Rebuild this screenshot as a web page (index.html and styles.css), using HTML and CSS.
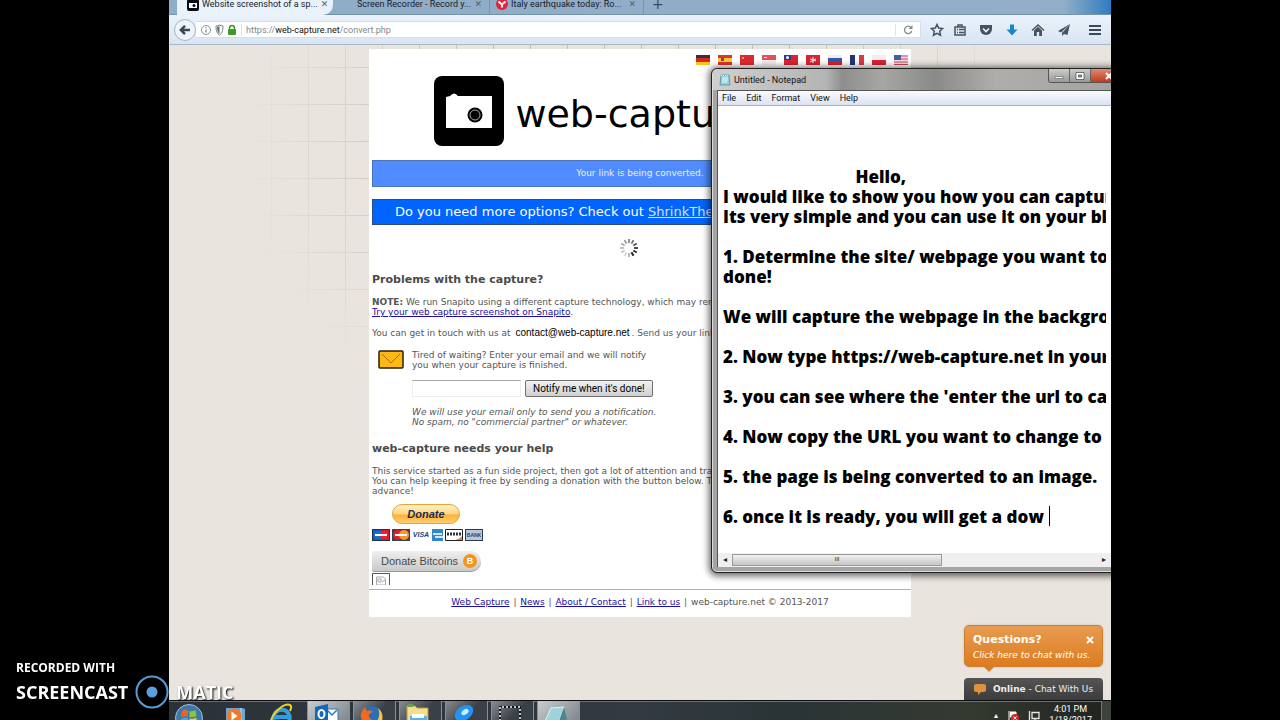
FILE: index.html
```
<!DOCTYPE html>
<html lang="en">
<head>
<meta charset="utf-8">
<title>Website screenshot of a specific url</title>
<link rel="stylesheet" href="styles.css">
</head>
<body>
<main class="desktop">
  <nav class="tabs" aria-label="Tabs">
    <a class="tab tab-active" href="#"><svg class="fav" viewBox="0 0 12 12"><rect width="12" height="12" rx="2" fill="#0a0a14"/><path d="M2 4h8v5H2z" fill="#fff"/><circle cx="7" cy="6.500" r="1.500" fill="#0a0a14"/></svg><span>Website screenshot of a sp...</span><i class="x">✕</i></a>
    <a class="tab tab-mid" href="#"><span>Screen Recorder - Record y...</span><i class="x">✕</i></a>
    <a class="tab tab-last" href="#"><svg class="fav" viewBox="0 0 12 12"><circle cx="6" cy="6" r="6" fill="#e2233b"/><path d="M2.500 3.500L6 6.500l3.500-3M6 6v3.500" stroke="#fff" stroke-width="2" fill="none"/></svg><span>Italy earthquake today: Ro...</span><i class="x">✕</i></a>
    <button class="newtab" aria-label="New tab">+</button>
  </nav>
  <div class="toolbar">
    <button class="back" aria-label="Back"><svg viewBox="0 0 24 24"><path d="M12 7l-5 5 5 5M7 12h11" fill="none" stroke="#3d4855" stroke-width="3"/></svg></button>
    <div class="urlbar">
      <svg class="ico-info" viewBox="0 0 32 12"><circle cx="6" cy="6" r="4.500" fill="none" stroke="#8b9096"/><path d="M6 5.500v3M6 3v1.200" stroke="#7b8086" stroke-width="1.200"/><path d="M16 2c1.500 0 2.500-.4 3.500-1 1 .6 2 1 3.500 1 0 5-1 7.500-3.500 9C17 9.500 16 7 16 2z" fill="#fff" stroke="#7b8086"/><path d="M19.500 2v8c-2-1.500-2.500-4-2.500-7z" fill="#6b7076"/></svg>
      <svg class="ico-lock" viewBox="0 0 10 12"><path d="M2.500 6V4a2.500 2.500 0 0 1 5 0v2" fill="none" stroke="#3f9a2c" stroke-width="1.500"/><rect x="1" y="5" width="8" height="6" rx="1" fill="#3f9a2c"/></svg>
      <span class="url">https://<b>web-capture.net</b>/convert.php</span>
      <button class="reload" aria-label="Reload"><svg viewBox="0 0 12 12"><path d="M9 3.500A3.700 3.700 0 1 0 9.700 7" fill="none" stroke="#858b92" stroke-width="1.300"/><path d="M10.500 1v4h-4z" fill="#858b92"/></svg></button>
    </div>
    <div class="tools">
      <button aria-label="Bookmark"><svg viewBox="0 0 14 14"><path d="M7 1.500l1.700 3.600 3.900.5-2.900 2.700.8 3.900L7 10.300l-3.500 1.900.8-3.900L1.400 5.600l3.900-.5z" fill="none" stroke="#47525f" stroke-width="1.500"/></svg></button>
      <button aria-label="Bookmarks list"><svg viewBox="0 0 14 14"><path d="M2 4h10v8H2zM5 4V2h4v2M4 6.500h1M6 6.500h5M4 9.500h1M6 9.500h5" fill="none" stroke="#47525f" stroke-width="1.500"/></svg></button>
      <button aria-label="Pocket"><svg viewBox="0 0 14 14"><path d="M1 2h12v4a6 6 0 0 1-12 0z" fill="#47525f"/><path d="M4 5.500l3 3 3-3" fill="none" stroke="#eef4fb" stroke-width="1.600"/></svg></button>
      <button aria-label="Downloads"><svg viewBox="0 0 14 14"><path d="M5 1.500h4v5h3.500L7 12.500 1.500 6.500H5z" fill="#1787c9"/></svg></button>
      <button aria-label="Home"><svg viewBox="0 0 14 14"><path d="M1 7.500l6-5.500 6 5.500" fill="none" stroke="#47525f" stroke-width="1.500"/><path d="M3 7.500l4-3.700 4 3.700V13H8.200V9H5.800v4H3z" fill="#47525f"/></svg></button>
      <button aria-label="Share"><svg viewBox="0 0 14 14"><path d="M13 1L1 8l3 1.500zM13 1L5 10v3l2-2 3.500 1z" fill="#47525f"/></svg></button>
      <button class="menu" aria-label="Menu"><svg viewBox="0 0 14 14"><path d="M1 3h12M1 7h12M1 11h12" stroke="#3d4855" stroke-width="2"/></svg></button>
    </div>
  </div>

  <section class="viewport">
    <div class="gridlines"></div>
    <article class="sheet">
      <div class="flags">
        <svg viewBox="0 0 14 10"><path fill="#333" d="M0 0h14v4H0z"/><path fill="#d22" d="M0 3h14v4H0z"/><path fill="#f6c71d" d="M0 7h14v3H0z"/></svg>
        <svg viewBox="0 0 14 10"><path fill="#d33" d="M0 0h14v10H0z"/><path fill="#f8cf2c" d="M0 3h14v4H0z"/><path fill="#b33" d="M3 3h3v3H3z"/></svg>
        <svg viewBox="0 0 14 10"><path fill="#de2a2d" d="M0 0h14v10H0z"/><path fill="#f4a13a" d="M2 2h2v2H2z"/></svg>
        <svg viewBox="0 0 14 10"><path fill="#f3eeee" d="M0 0h14v10H0z"/><path fill="#e0525a" d="M0 0h14v5H0z"/><path fill="#fff" d="M2 2h3v1H2z"/></svg>
        <svg viewBox="0 0 14 10"><path fill="#dc2330" d="M0 0h14v10H0z"/><path fill="#2b3c96" d="M0 0h7v5H0z"/><circle cx="3.500" cy="2.500" r="1.500" fill="#fff"/></svg>
        <svg viewBox="0 0 14 10"><path fill="#dc2330" d="M0 0h14v10H0z"/><path d="M7 2v6M4 4l6 2M4 7l6-3" stroke="#fff"/></svg>
        <svg viewBox="0 0 14 10"><path fill="#eee" d="M0 0h14v10H0z"/><path fill="#2c5cae" d="M0 3h14v4H0z"/><path fill="#d22" d="M0 7h14v3H0z"/></svg>
        <svg viewBox="0 0 14 10"><path fill="#fff" d="M0 0h14v10H0z"/><path fill="#25337d" d="M0 0h5v10H0z"/><path fill="#dc3a42" d="M9 0h5v10H9z"/></svg>
        <svg viewBox="0 0 14 10"><path fill="#f3eeee" d="M0 0h14v10H0z"/><path fill="#dc2330" d="M0 5h14v5H0z"/></svg>
        <svg viewBox="0 0 14 10"><path fill="#f1dfe3" d="M0 0h14v10H0z"/><path d="M0 1h14M0 4h14M0 7h14M0 9.500h14" stroke="#d0495a"/><path fill="#4a5ca8" d="M0 0h7v5H0z"/></svg>
      </div>
      <header class="brand">
        <svg viewBox="0 0 70 70"><rect width="70" height="70" rx="8" fill="#000"/><path d="M12 21l4-1q4-5 8 0h34v32H12z" fill="#fff"/><circle cx="41" cy="39" r="7.500" fill="#000"/><circle cx="41" cy="39" r="5" fill="none" stroke="#aaa"/></svg>
        <span>web-capture.net</span>
      </header>
      <p class="bar bar-status">Your link is being converted.</p>
      <p class="bar bar-promo">Do you need more options? Check out <a href="#">ShrinkTheWeb</a></p>
      <svg class="spinner" viewBox="-10 -10 20 20" stroke="#222" stroke-width="1.600">
        <path d="M5 0h4"/><path d="M5 0h4" transform="rotate(30)"/><path d="M5 0h4" transform="rotate(60)" stroke-width="2"/><path d="M5 0h4" transform="rotate(90)" opacity=".4"/><path d="M5 0h4" transform="rotate(120)" opacity=".2"/><path d="M5 0h4" transform="rotate(150)" opacity=".25"/><path d="M5 0h4" transform="rotate(180)" opacity=".35"/><path d="M5 0h4" transform="rotate(210)" opacity=".4"/><path d="M5 0h4" transform="rotate(240)" opacity=".5"/><path d="M5 0h4" transform="rotate(270)" opacity=".6"/><path d="M5 0h4" transform="rotate(300)" opacity=".7"/><path d="M5 0h4" transform="rotate(330)" opacity=".8"/>
      </svg>
      <h2>Problems with the capture?</h2>
      <p class="note"><b>NOTE:</b> We run Snapito using a different capture technology, which may render better.<br><a href="#">Try your web capture screenshot on Snapito</a>.</p>
      <p class="touch">You can get in touch with us at <span class="mail">contact@web-capture.net</span>. Send us your link.</p>
      <form class="notify">
        <svg viewBox="0 0 26 19"><rect x="1" y="1" width="24" height="17" rx="1" fill="#fdb813" stroke="#2d1d05" stroke-width="1.500"/><path d="M4 4l9 9 9-9" fill="none" stroke="#a86c08"/></svg>
        <div>
          <label for="email">Tired of waiting? Enter your email and we will notify<br>you when your capture is finished.</label>
          <div class="row"><input id="email" type="email"><button type="button">Notify me when it's done!</button></div>
          <em>We will use your email only to send you a notification.<br>No spam, no "commercial partner" or whatever.</em>
        </div>
      </form>
      <h2>web-capture needs your help</h2>
      <p class="help">This service started as a fun side project, then got a lot of attention and traffic.<br>You can help keeping it free by sending a donation with the button below. Thanks in<br>advance!</p>
      <button class="donate">Donate</button>
      <div class="cards">
        <svg viewBox="0 0 18 12"><path fill="#1d58b8" d="M0 0h18v12H0z"/><path fill="#d31f30" d="M9 0h9v12H9z"/><circle cx="6" cy="6" r="4" fill="#1a6fd0"/><circle cx="12" cy="6" r="4" fill="#e8222e"/><path d="M3 6h12" stroke="#fff" stroke-width="2"/><path d="M.5.500h17v11H.5z" fill="none" stroke="#234"/></svg>
        <svg viewBox="0 0 18 12"><path fill="#7b2b3a" d="M0 0h18v12H0z"/><circle cx="6" cy="6" r="5" fill="#d8222c"/><circle cx="12" cy="6" r="5" fill="#f09a2d"/><path d="M3 6h12" stroke="#fff" stroke-width="2"/><path d="M.5.500h17v11H.5z" fill="none" stroke="#345"/></svg>
        <span class="card card-visa">VISA</span>
        <svg class="amex" viewBox="0 0 11 12"><path fill="#3388c4" d="M0 0h11v12H0z"/><path d="M1 5h9M3 8h8" stroke="#cfe6f5" stroke-width="2"/></svg>
        <svg viewBox="0 0 18 12"><path fill="#fff" d="M0 0h18v12H0z"/><path fill="#ee8a2b" d="M6 12q8-1 12-6v6z"/><path d="M2 5h14" stroke="#333" stroke-width="3" stroke-dasharray="2 1"/><path d="M.5.500h17v11H.5z" fill="none" stroke="#222"/></svg>
        <span class="card card-bank">BANK</span>
      </div>
      <button class="bitcoin">Donate Bitcoins <span>B</span></button>
      <svg class="broken" viewBox="0 0 18 12"><path d="M.5 12V.500h17V12" fill="none" stroke="#555"/><path d="M4.500 4h7l2 2v6h-9zM6 6h3v3H6zM10 9l3-2" fill="none" stroke="#aaa"/></svg>
      <footer><a href="#">Web Capture</a> <i>|</i> <a href="#">News</a> <i>|</i> <a href="#">About / Contact</a> <i>|</i> <a href="#">Link to us</a> <i>|</i> web-capture.net © 2013-2017</footer>
    </article>
    <aside class="chat">
      <div class="bubble"><button aria-label="Close"><svg viewBox="0 0 8 8"><path d="M1 1l6 6M7 1L1 7" stroke="#fff" stroke-width="2"/></svg></button><b>Questions?</b><br><em>Click here to chat with us.</em></div>
      <button class="online"><svg viewBox="0 0 12 11"><path d="M2 0h8a2 2 0 0 1 2 2v4a2 2 0 0 1-2 2H7l-3 3V8H2a2 2 0 0 1-2-2V2a2 2 0 0 1 2-2z" fill="#e0913c"/></svg><span><b>Online</b> - Chat With Us</span></button>
    </aside>
  </section>

  <section class="notepad" aria-label="Untitled - Notepad">
    <header class="titlebar">
      <svg viewBox="0 0 12 12"><path d="M2 1h8l1 10H1z" fill="#8fd0dc" stroke="#6a9aa6"/><path d="M3 4h6M3 6h6M3 8h5" stroke="#e9fbff"/><path d="M2 1.500h8" stroke="#dff" stroke-dasharray="1 1"/></svg>
      <span>Untitled - Notepad</span>
      <div class="wbtns"><button aria-label="Minimize"><svg viewBox="0 0 10 8"><path d="M1 4.500h8v2H1z" fill="#fff" stroke="#555" stroke-width=".6"/></svg></button><button aria-label="Maximize"><svg viewBox="0 0 10 8"><path d="M1 .500h8v7H1z" fill="#fff" stroke="#555" stroke-width=".8"/><path d="M3.500 3h3v2h-3z" fill="#999" stroke="#555" stroke-width=".8"/></svg></button><button class="close" aria-label="Close"><svg viewBox="0 0 10 8"><path d="M2 1l6 6M8 1L2 7" stroke="#fff" stroke-width="2"/></svg></button></div>
    </header>
    <div class="inner">
      <nav class="menus"><button>File</button><button>Edit</button><button>Format</button><button>View</button><button>Help</button></nav>
      <div class="edit">
        <textarea wrap="off" spellcheck="false" aria-label="Text editor">



                              Hello,
I would like to show you how you can capture
Its very simple and you can use it on your bl

1. Determine the site/ webpage you want to
done!

We will capture the webpage in the background

2. Now type https://web-capture.net in your

3. you can see where the 'enter the url to ca

4. Now copy the URL you want to change to

5. the page is being converted to an image.

6. once it is ready, you will get a dow</textarea>
        <i class="caret"></i>
      </div>
      <div class="scroll"><span>◂</span><div class="thumb">III</div><span>▸</span></div>
    </div>
  </section>

  <footer class="taskbar">
    <div class="apps">
      <div class="app plain"><svg viewBox="0 0 28 18"><circle cx="14" cy="15" r="13.500" fill="#3f78a8" stroke="#9cc4dd"/><path d="M7 8q3-2 6-.5v6q-3-1-7 1z" fill="#e8642c"/><path d="M14.500 8q3 1 6-1l1 6q-4 2-7 1z" fill="#8cc63e"/><path d="M6 16q3-2 7-1v3H6z" fill="#45a8e6"/><path d="M14.500 15.500q4 1 7-1V18h-7z" fill="#fbc82e"/></svg></div>
      <div class="app plain"><svg viewBox="0 0 28 18"><path d="M5 5h16l3 1v12H5z" fill="#6aa7d6"/><path d="M20 5v13" stroke="#b8dbf2"/><circle cx="13" cy="13" r="7.500" fill="#f07a28"/><path d="M10.500 8.500v9l6-4.500z" fill="#fff"/></svg></div>
      <div class="app plain"><svg viewBox="0 0 28 18"><path d="M22 18a8 8 0 1 0-15-1M8 14h14" fill="none" stroke="#2f9fe2" stroke-width="4"/><path d="M4 17C8 7 18 0 23 2c2 1 1 4 0 6" fill="none" stroke="#f0d02e" stroke-width="2"/></svg></div>
      <div class="app lit"><svg viewBox="0 0 28 18"><path d="M14 6h12v12H14z" fill="#fff" stroke="#2a7ac4"/><path d="M15 7l5 5 5-5" fill="none" stroke="#2a7ac4" stroke-width="1.500"/><path d="M3 4l13-3v17H3z" fill="#1468b8"/><ellipse cx="9.500" cy="11" rx="3" ry="4" fill="none" stroke="#fff" stroke-width="2"/></svg></div>
      <div class="app"><svg viewBox="0 0 28 18"><circle cx="14" cy="13" r="10" fill="#2d6fb6"/><path d="M4 8q-3 7 1 10h13q-8-1-7-7l4-2q-3-3-6-1-2-2-1-4-3 1-4 4z" fill="#ee6a1f"/><path d="M20 5q6 5 4 13h-5q4-6 1-13z" fill="#fbc43a"/></svg></div>
      <div class="app"><svg viewBox="0 0 28 18"><path d="M3 3h8l2 2h11v13H3z" fill="#f4dd8b" stroke="#b99a45"/><path d="M6 13h17v5H6z" fill="#5fb0dc"/><path d="M8 11h12v4H8z" fill="#fff"/><path d="M4 1h5v3H4z" fill="#6a9c54"/></svg></div>
      <div class="app"><svg viewBox="0 0 28 18"><ellipse cx="14" cy="10" rx="10" ry="7" transform="rotate(-35 14 10)" fill="#2295f4"/><ellipse cx="15" cy="9" rx="4" ry="2.500" transform="rotate(-35 15 9)" fill="#cdeeff"/></svg></div>
      <div class="app"><svg viewBox="0 0 28 18"><path d="M4 18V4h20v14" fill="none" stroke="#111" stroke-width="2"/><path d="M4 18V4h20v14" fill="none" stroke="#fff" stroke-width="1.500" stroke-dasharray="2 2"/></svg></div>
      <div class="app lit"><svg viewBox="0 0 28 18"><path d="M9 5l13-1-5 14H3z" fill="#9fd3dc" stroke="#dff4f7"/><path d="M22 4l3 14h-8z" fill="#4c8492"/></svg></div>
    </div>
    <div class="tray">
      <span>▴</span>
      <svg viewBox="0 0 12 12"><path d="M2 1v11M3 2h6v5H3" fill="#fff" stroke="#fff"/><circle cx="8" cy="8" r="4" fill="#d8232b"/><path d="M6.500 6.500l3 3M9.500 6.500l-3 3" stroke="#fff"/></svg>
      <svg viewBox="0 0 12 12"><path d="M4 2.500h7v6H4zM1.500 1v10H8M7 9v3" fill="none" stroke="#e8e8e8" stroke-width="1.300"/></svg>
      <time>4:01 PM<br>1/18/2017</time>
      <i class="peek"></i>
    </div>
  </footer>
</main>
<div class="watermark">
  <small>RECORDED WITH</small>
  <div><span>SCREENCAST</span><svg viewBox="0 0 34 34"><circle cx="17" cy="17" r="15.500" fill="#000" stroke="#5b9bd5" stroke-width="2"/><circle cx="17" cy="17" r="5.500" fill="#5b9fdc"/></svg><span>MATIC</span></div>
</div>
</body>
</html>
```
FILE: styles.css
```
* { box-sizing: border-box; }
body { margin: 0; background: #000; font-family: "DejaVu Sans", sans-serif; font-size: 9px; line-height: 10px; color: #555; }
button { border: 0; padding: 0; background: none; font: inherit; color: inherit; }
svg { display: block; flex: none; }
p, h2 { margin: 0; }
a { color: #1a0fa8; }
.desktop { position: relative; height: 100vh; margin: 0 169px; overflow: hidden; display: flex; flex-direction: column; }

.tabs { height: 15px; flex: none; display: flex; background: linear-gradient(90deg, #8fadc8, #93aec6 92%, #91aec8 95%, #2f7cc0); border-bottom: 1px solid #7592ab; padding-left: 8px; font: 9px/11px Roboto, sans-serif; }
.tab { display: flex; align-items: center; gap: 3px; padding-bottom: 6px; color: #16202c; text-decoration: none; white-space: nowrap; }
.tab span { flex: 1; }
.tab-active { width: 156px; height: 15px; padding-left: 10px; padding-right: 5px; background: #e9f2fb; border-radius: 0 0 10px 0; }
.tab-mid { width: 156px; padding-left: 24px; padding-right: 7px; }
.tab-last { width: 155px; padding-left: 6px; padding-right: 7px; border-left: 1px solid #7894ad; border-right: 1px solid #7894ad; }
.fav { width: 12px; height: 12px; }
.x { font: 9px/9px "DejaVu Sans", sans-serif; color: #536272; }
.newtab { padding: 0 8px 5px; font: 14px/9px "DejaVu Sans", sans-serif; color: #3c4854; }

.toolbar { height: 30px; flex: none; display: flex; align-items: center; background: linear-gradient(#eaf3fc, #d9e5f2); border-bottom: 1px solid #a9b8c8; padding: 0 9px 0 5px; }
.back { width: 22px; height: 22px; border: 1px solid #a7b7c7; border-radius: 50%; background: #edf4fb; }
.back svg { width: 20px; height: 20px; }
.urlbar { flex: 1; height: 17px; display: flex; align-items: center; background: #fff; border: 1px solid #d5dee8; border-left: 0; padding-left: 4px; }
.ico-info { width: 32px; height: 12px; margin-right: -5px; }
.ico-lock { width: 10px; height: 12px; }
.url { flex: 1; margin-left: 4px; padding-left: 4px; border-left: 1px solid #e5e0da; font: 9px/12px Roboto, sans-serif; color: #85898e; }
.url b { font-weight: 400; color: #111; }
.reload { border-left: 1px solid #dde3ea; padding: 0 6px; }
.reload svg { width: 12px; height: 12px; }
.tools { display: flex; gap: 12px; margin-left: 9px; align-items: center; }
.tools svg { width: 14px; height: 14px; }
.tools button:first-child { margin-right: -3px; }
.menu { margin-left: 5px; }

.viewport { position: relative; flex: 1; min-height: 0; background: #e9e5de; padding-top: 4px; }
.gridlines { position: absolute; inset: 0 0 auto 0; height: 350px; background: repeating-linear-gradient(90deg, transparent 0 28px, #bdb8b0 28px 29px, transparent 29px 37px), repeating-linear-gradient(transparent 0 22px, #bdb8b0 22px 23px, transparent 23px 37px); -webkit-mask-image: radial-gradient(ellipse 420px 330px at 50% 30%, #000 50%, transparent 95%); mask-image: radial-gradient(ellipse 420px 330px at 50% 30%, #000 50%, transparent 95%); opacity: .8; }
.sheet { position: relative; width: 542px; max-width: 100%; margin: 0 auto; background: #fff; padding: 5px 3px 10px; white-space: nowrap; }
.flags { display: flex; justify-content: flex-end; gap: 8px; height: 22px; }
.flags svg { width: 14px; height: 10px; margin-top: 1px; }
.brand { display: flex; align-items: center; justify-content: center; gap: 11px; color: #000; font-size: 38px; line-height: 70px; padding-right: 18px; }
.brand svg { width: 70px; height: 70px; }
.brand span { padding-top: 6px; }
.bar { text-align: center; border: 1px solid #2a4c80; color: #fff; }
.bar-status { margin-top: 11px; line-height: 25px; background: #508cff; border-color: #4a74b8; color: #e6f0ff; }
.bar-promo { margin-top: 12px; font-size: 13px; line-height: 24px; background: #0164ff; padding-left: 22px; text-align: left; }
.bar-promo a { color: #cfe2ff; }
.flags { height: 22px; margin-bottom: -3px; }
.spinner { width: 20px; height: 20px; margin: 13px 0 0 46%; }
h2 { font-size: 11px; line-height: 14px; margin-top: 15px; color: #4a4a4a; }
.note { margin-top: 10px; }
.touch { margin-top: 11px; }
.mail { font-family: "Liberation Sans", sans-serif; font-size: 10px; color: #000; margin: 0 2px; }
.notify { display: flex; gap: 8px; margin: 12px 0 0 6px; }
.notify > svg { width: 26px; height: 19px; }
.row { display: flex; gap: 4px; margin: 10px 0; }
.row input { width: 109px; height: 17px; padding: 0 3px; border: 1px solid #eee; border-top-color: #aaa; background: #fff; }
.row button { height: 17px; padding: 0 7px; border: 1px solid #707070; border-radius: 2px; background: linear-gradient(#f2f2f2, #cfcfcf); color: #000; font: 10px/14px Roboto, sans-serif; }
.help { margin-top: 10px; }
.donate { display: block; margin: 8px 0 5px 20px; width: 68px; height: 20px; border: 1px solid #e8a33a; border-radius: 10px; background: linear-gradient(#fff0c8, #ffd67c 50%, #fdb137 55%, #ffcf70); color: #1d2b50; font: italic bold 11px/18px "Liberation Sans", sans-serif; }
.cards { display: flex; gap: 2px; }
.cards svg { width: 18px; height: 12px; }
.cards .amex { width: 11px; }
.card { font: italic bold 7px/12px "Liberation Sans", sans-serif; color: #20457e; width: 18px; text-align: center; }
.card-bank { font-style: normal; font-size: 5px; line-height: 10px; border: 1px solid #2c3c50; background: #b8c8da; }
.bitcoin { display: flex; align-items: center; gap: 5px; margin-top: 10px; height: 21px; padding: 0 4px 0 9px; border-radius: 2px 10px 10px 2px; background: linear-gradient(#efefef, #c9c9c9); border-bottom: 1px solid #999; color: #4a4a4a; font: 11px/20px "Liberation Sans", sans-serif; }
.bitcoin span { width: 14px; height: 14px; border-radius: 50%; background: #f3961c; color: #fff; font-weight: bold; font-size: 9px; line-height: 14px; }
.broken { width: 18px; height: 12px; margin-top: 1px; }
.sheet footer { margin: 4px -3px 0; padding-top: 7px; border-top: 1px solid #b0b0b0; text-align: center; }
.sheet footer i { font-style: normal; margin: 0 1px; }

.chat { position: absolute; right: 8px; bottom: 0; width: 139px; z-index: 3; }
.bubble { position: relative; height: 42px; margin-bottom: 11px; padding: 6px 8px; border-radius: 5px; border: 1px solid #d07e2c; background: linear-gradient(#e89b50, #dc7c20); color: #fff; line-height: 15px; box-shadow: 0 0 2px #8888; white-space: nowrap; }
.bubble b { font-size: 11px; }
.bubble::after { content: ""; position: absolute; left: 19px; top: 41px; border: 5px solid transparent; border-top-color: #dc7c20; }
.bubble button { float: right; padding: 4px 0 0; }
.bubble svg { width: 8px; height: 8px; }
.online { display: flex; align-items: center; justify-content: center; gap: 7px; width: 100%; height: 22px; background: linear-gradient(#555, #3c3c3c); border-radius: 4px 4px 0 0; color: #eee; white-space: nowrap; }
.online svg { width: 12px; height: 11px; }

.notepad { position: absolute; left: 542px; right: -8px; top: 68px; height: 505px; z-index: 2; display: flex; flex-direction: column; padding: 0 7px 5px 5px; border: 1px solid #222; border-radius: 6px; background: #a5a5a5; box-shadow: 0 1px 7px 2px #0009, inset 0 0 0 1px #ddd; }
.titlebar { height: 21px; flex: none; margin: 0 -6px 0 -4px; border-radius: 5px 5px 0 0; padding-left: 6px; display: flex; align-items: center; gap: 3px; background: linear-gradient(90deg, #cfcfcf, #b4b4b4 28%, #8e8e8e 32%, #a6a6a2 42%, #8a8a88 55%, #b0aeaa 70%, #a4a29e); font: 9px/12px Roboto, sans-serif; color: #111; }
.titlebar > svg { width: 12px; height: 12px; }
.wbtns { margin-left: auto; margin-right: -11px; align-self: flex-start; display: flex; border: 1px solid #555; border-top: 0; border-radius: 0 0 3px 3px; overflow: hidden; height: 14px; }
.wbtns button { width: 21px; border-right: 1px solid #666; background: linear-gradient(#ccc, #999); display: flex; align-items: center; justify-content: center; }
.wbtns .close { width: 36px; background: linear-gradient(#e08a74, #c43a1c); }
.wbtns svg { width: 10px; height: 8px; }
.inner { flex: 1; min-height: 0; display: flex; flex-direction: column; background: #fff; border: 1px solid #555; border-width: 1px 0 0 1px; }
.menus { height: 15px; flex: none; display: flex; gap: 10px; padding-left: 4px; background: linear-gradient(#fafbfe, #dbe2f2); border-bottom: 1px solid #9fb2c8; font: 9px/13px Roboto, sans-serif; color: #111; }
.edit { position: relative; flex: 1; min-height: 0; padding: 1px 5px 0 5px; }
textarea { display: block; width: 100%; height: 100%; border: 0; padding: 0; resize: none; outline: 0; overflow: hidden; background: #fff; color: #000; font: 800 17px/20px "Open Sans", sans-serif; }
.caret { position: absolute; left: 331px; top: 400px; width: 1px; height: 20px; background: #000; }
.scroll { height: 14px; flex: none; display: flex; align-items: center; background: #efefef; color: #222; font-size: 8px; }
.scroll span { width: 14px; text-align: center; }
.thumb { width: 210px; height: 12px; margin-right: auto; border: 1px solid #999; background: linear-gradient(#f0f0f0, #c6c6c6); text-align: center; font: 6px/9px "Liberation Sans", sans-serif; }

.taskbar { height: 20px; flex: none; display: flex; justify-content: space-between; overflow: hidden; background: linear-gradient(90deg, #2c3238, #333a42 50%, #2a3436 65%, #343a30 85%, #20221e); border-top: 1px solid #0c0e10; box-shadow: inset 0 1px #6a7076; color: #fff; }
.apps { display: flex; }
.app { width: 43px; margin-right: 3px; padding: 2px 0 0 4px; border: 1px solid #8a8f96; border-width: 0 1px; background: linear-gradient(135deg, #878c92, #3a4048 60%); }
.app.lit { background: linear-gradient(135deg, #c8ccd0, #80868c); }
.app.plain { border: 0; padding-left: 6px; background: none; }
.app svg { width: 28px; height: 18px; }
.tray { display: flex; gap: 9px; padding-top: 3px; font: 9px/11px Roboto, sans-serif; text-align: center; white-space: nowrap; }
.tray svg { width: 12px; height: 12px; margin-top: 6px; }
.tray > span { padding-top: 6px; font-size: 8px; }
.peek { width: 10px; margin-top: -3px; border-left: 1px solid #777; background: #3e423c; }

.watermark { position: fixed; left: 16px; bottom: 11px; z-index: 5; color: #fff; font-family: "Open Sans", sans-serif; font-weight: 700; text-shadow: 1px 1px 2px #000; }
.watermark small { display: block; font-size: 12px; line-height: 14px; }
.watermark div { display: flex; align-items: center; gap: 7px; font-size: 18px; line-height: 34px; }
.watermark svg { width: 34px; height: 34px; }
```
